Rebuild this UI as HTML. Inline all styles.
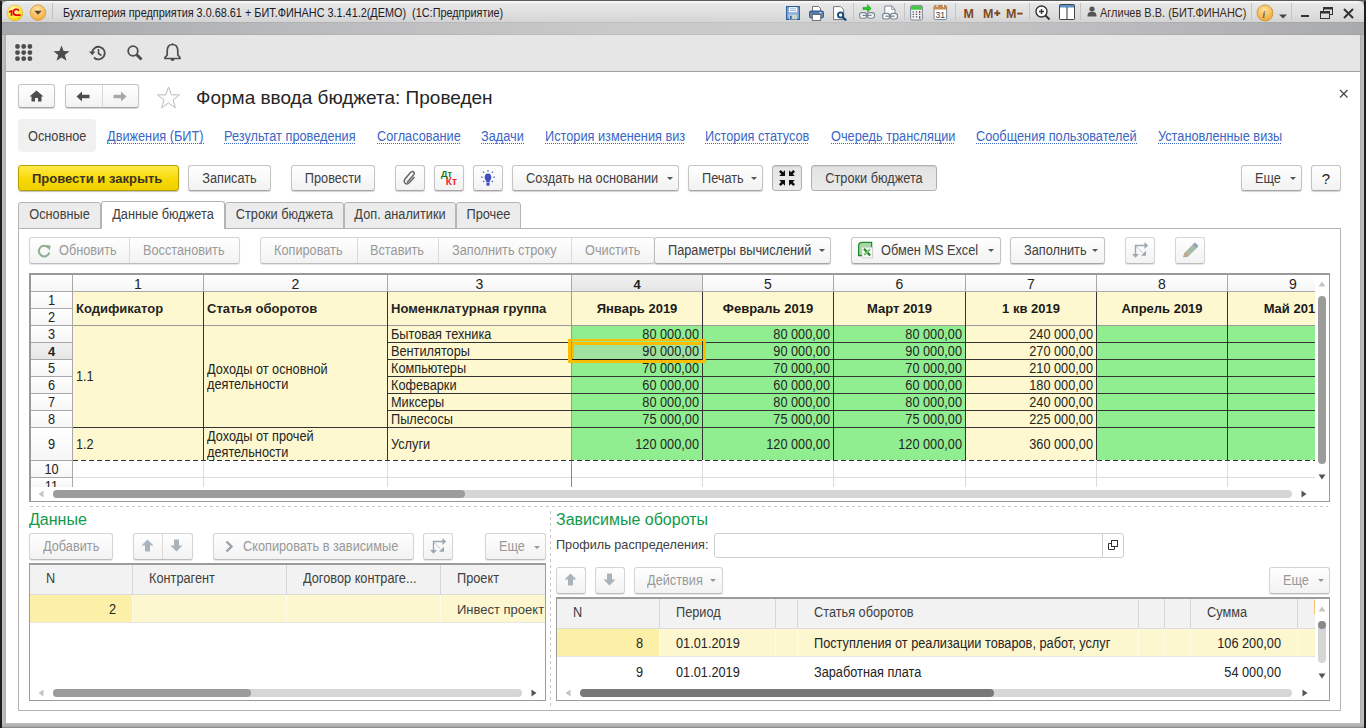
<!DOCTYPE html>
<html><head><meta charset="utf-8"><title>1C</title>
<style>
*{box-sizing:border-box}
html,body{margin:0;padding:0}
body{width:1366px;height:728px;overflow:hidden;position:relative;background:#a9aaad;font-family:"Liberation Sans", sans-serif;}
div{position:absolute}
.t{white-space:nowrap}
.btn{border:1px solid #c4c4c4;border-bottom-color:#a6a6a6;border-radius:3px;background:linear-gradient(#ffffff,#f2f2f2);box-shadow:0 1px 1px rgba(0,0,0,0.18)}
.btnd{border:1px solid #d4d4d4;border-bottom-color:#bcbcbc;border-radius:3px;background:linear-gradient(#ffffff,#f2f2f2);box-shadow:0 1px 1px rgba(0,0,0,0.10)}
.lnk{border-bottom:1px dotted #3b6bc0}
</style></head><body>

<div style="left:0px;top:0px;width:1366px;height:728px;background:#a9aaad"></div>
<div style="left:0px;top:0px;width:2px;height:728px;background:#1e1e1e"></div>
<div style="left:2px;top:22px;width:4px;height:706px;background:linear-gradient(90deg,#c4c4c4,#aeaeb0)"></div>
<div style="left:1364px;top:0px;width:2px;height:728px;background:#1e1e1e"></div>
<div style="left:1360px;top:22px;width:4px;height:706px;background:linear-gradient(90deg,#aeaeb0,#c4c4c4)"></div>
<div style="left:2px;top:723px;width:1362px;height:5px;background:linear-gradient(#bdbdbd,#a4a4a6)"></div>
<div style="left:2px;top:727px;width:1362px;height:1px;background:#8c8c8c"></div>
<div style="left:0px;top:0px;width:1366px;height:1px;background:#5a5a5a"></div>
<div style="left:2px;top:1px;width:1362px;height:21px;background:linear-gradient(#fbfbfb,#e6e6e6 15%,#dddddd 70%,#d3d3d4);border-radius:6px 6px 0 0"></div>
<div style="left:2px;top:22px;width:1362px;height:13px;background:linear-gradient(90deg,#a7a8ab 0%,#b8b9bb 20%,#c9c9c9 45%,#cbcbcb 58%,#bdbdbf 80%,#a9aaad 100%)"></div>
<div style="left:2px;top:22px;width:1362px;height:1px;background:rgba(0,0,0,0.04)"></div>
<div style="left:2px;top:34px;width:1362px;height:1px;background:rgba(0,0,0,0.05)"></div>
<div style="left:6px;top:35px;width:1354px;height:688px;background:#ffffff"></div>
<div style="left:6px;top:35px;width:1354px;height:36px;background:#e6e6e6"></div>
<div style="left:6px;top:71px;width:1354px;height:1px;background:#a0a0a0"></div>
<svg style="position:absolute;left:6px;top:3px;" width="20" height="20" viewBox="0 0 20 20"><defs><radialGradient id="g1c" cx="40%" cy="30%" r="75%"><stop offset="0" stop-color="#fffbc0"/><stop offset="0.6" stop-color="#fde84a"/><stop offset="1" stop-color="#f0c000"/></radialGradient></defs><circle cx="8.9" cy="10" r="7.8" fill="url(#g1c)" stroke="#e3b400" stroke-width="0.6"/><path d="M2.9 8.3 L5.2 6.9 H6.4 V12.8 H4.7 V9.1 L2.9 10 Z" fill="#e8000b"/><path d="M12.9 7.9 A2.9 2.9 0 1 0 10.2 12.1 H14.6" fill="none" stroke="#e8000b" stroke-width="1.7"/></svg>
<svg style="position:absolute;left:29px;top:3px;" width="20" height="20" viewBox="0 0 20 20"><defs><radialGradient id="gor" cx="45%" cy="30%" r="70%"><stop offset="0" stop-color="#ffe5a8"/><stop offset="1" stop-color="#f5a93a"/></radialGradient></defs><circle cx="9" cy="9.6" r="7.8" fill="url(#gor)" stroke="#d49a40" stroke-width="0.8"/><path d="M5.2 7.8 L12.8 7.8 L9 11.8 Z" fill="#5a4630"/></svg>
<div style="left:52px;top:3px;width:1px;height:16px;background:#c0c0c0"></div>
<div class="t" style="left:63px;top:6.84px;font-size:12px;line-height:12px;height:12px;color:#1a1a28;font-weight:normal;text-align:left;transform:scaleX(0.905);transform-origin:0 0">Бухгалтерия предприятия 3.0.68.61 + БИТ.ФИНАНС 3.1.41.2(ДЕМО)&nbsp; (1С:Предприятие)</div>
<svg style="position:absolute;left:786px;top:6px;" width="14" height="14" viewBox="0 0 14 14"><path d="M0.6 0.6 H13.4 V13.4 H0.6 Z" fill="#86ade0" stroke="#2e5c98" stroke-width="1.1"/><rect x="3" y="1.2" width="8" height="5" fill="#fff"/><path d="M4 2.8 H10 M4 4.6 H10" stroke="#7d9cc8" stroke-width="0.8"/><rect x="3" y="8.6" width="8" height="4.8" fill="#c9d6cc"/><rect x="4" y="9.8" width="1.6" height="3.2" fill="#2e5c98"/></svg>
<svg style="position:absolute;left:809px;top:6px;" width="15" height="15" viewBox="0 0 15 15"><path d="M3.5 0.5 H9.5 L11.5 2.5 V6 H3.5 Z" fill="#fff" stroke="#555" stroke-width="0.8"/><rect x="0.7" y="5.2" width="13.6" height="6.6" rx="1.5" fill="#6f97cc" stroke="#2a548a" stroke-width="1.2"/><path d="M2 7 H13" stroke="#2a548a" stroke-width="0.8"/><rect x="10.5" y="6.2" width="2" height="1" fill="#fff"/><rect x="3.3" y="8.6" width="8.4" height="5.8" fill="#fff" stroke="#555" stroke-width="0.8"/></svg>
<svg style="position:absolute;left:833px;top:6px;" width="15" height="15" viewBox="0 0 15 15"><path d="M0.6 0.6 H7.6 L10.6 3.6 V13.6 H0.6 Z" fill="#fff" stroke="#6a6a6a" stroke-width="0.9"/><circle cx="7.6" cy="9" r="2.6" fill="#fff" stroke="#164a7c" stroke-width="1.9"/><path d="M9.4 10.9 L13.2 14.5" stroke="#164a7c" stroke-width="2.2"/></svg>
<div style="left:853px;top:3px;width:1px;height:17px;background:#c4c4c4"></div>
<svg style="position:absolute;left:859px;top:4px;" width="17" height="16" viewBox="0 0 17 16"><rect x="0.6" y="8.6" width="7" height="5.6" rx="2.2" fill="#f4f6f8" stroke="#7a8694" stroke-width="1.1"/><rect x="8.4" y="8.6" width="7" height="5.6" rx="2.2" fill="#f4f6f8" stroke="#7a8694" stroke-width="1.1"/><path d="M3.5 11.4 H12.5" stroke="#7a8694" stroke-width="1.3"/><path d="M4 3.4 H8.5 V0.8 L12.2 4.4 L8.5 8 V5.4 H4 Z" fill="#22cc22" stroke="#139a13" stroke-width="0.6"/></svg>
<svg style="position:absolute;left:882px;top:5px;" width="17" height="16" viewBox="0 0 17 16"><path d="M2.8 9 V1 H9.6 L13 4.4 V9" fill="#fff" stroke="#7a8694" stroke-width="1"/><path d="M9.6 1 V4.4 H13" fill="none" stroke="#7a8694" stroke-width="0.8"/><rect x="0.6" y="8.4" width="7" height="5.6" rx="2.2" fill="#f4f6f8" stroke="#7a8694" stroke-width="1.1"/><rect x="8.4" y="8.4" width="7" height="5.6" rx="2.2" fill="#f4f6f8" stroke="#7a8694" stroke-width="1.1"/><path d="M3.5 11.2 H12.5" stroke="#7a8694" stroke-width="1.3"/></svg>
<div style="left:904px;top:3px;width:1px;height:17px;background:#c4c4c4"></div>
<svg style="position:absolute;left:910px;top:5px;" width="13" height="16" viewBox="0 0 13 16"><rect x="0.6" y="0.6" width="11.8" height="14.4" rx="1.2" fill="#f0f3f6" stroke="#7a8694" stroke-width="1"/><rect x="1.1" y="1.1" width="10.8" height="3.6" fill="#3ec93e"/><g fill="#555"><rect x="2.6" y="6.4" width="1.4" height="1.2"/><rect x="5.8" y="6.4" width="1.4" height="1.2"/><rect x="2.6" y="8.8" width="1.4" height="1.2"/><rect x="5.8" y="8.8" width="1.4" height="1.2"/><rect x="9" y="8.8" width="1.4" height="1.2"/><rect x="2.6" y="11.2" width="1.4" height="1.2"/><rect x="5.8" y="11.2" width="1.4" height="1.2"/><rect x="9" y="11.2" width="1.4" height="2.4"/></g><rect x="9" y="6" width="1.4" height="2" fill="#e52020"/></svg>
<svg style="position:absolute;left:933px;top:4px;" width="15" height="17" viewBox="0 0 15 17"><rect x="1" y="1.4" width="12.6" height="14.2" rx="1.5" fill="#fff" stroke="#7a8694" stroke-width="1"/><path d="M1 3 C1 2 1.6 1.4 2.6 1.4 H12 C13 1.4 13.6 2 13.6 3 V5.4 H1 Z" fill="#c98a4e"/><rect x="3.6" y="0.6" width="1" height="2.6" fill="#fff"/><rect x="10" y="0.6" width="1" height="2.6" fill="#fff"/><text x="2.4" y="14" font-family="Liberation Sans" font-size="8.6" fill="#444">31</text></svg>
<div style="left:955px;top:3px;width:1px;height:17px;background:#c4c4c4"></div>
<svg style="position:absolute;left:960px;top:4px;" width="66" height="18" viewBox="0 0 66 18"><g font-family="Liberation Sans" font-weight="bold" font-size="12.5" fill="#7e4a1e"><text x="3.4" y="13.6">M</text><text x="23" y="13.6">M</text><text x="46" y="13.6">M</text></g><path d="M34.3 9.2 H40.2 M37.25 6.3 V12.1" stroke="#7e4a1e" stroke-width="1.9"/><path d="M57.2 9.6 H62.6" stroke="#7e4a1e" stroke-width="1.9"/></svg>
<div style="left:1029px;top:3px;width:1px;height:17px;background:#c4c4c4"></div>
<svg style="position:absolute;left:1035px;top:5px;" width="16" height="16" viewBox="0 0 16 16"><circle cx="6.5" cy="6.5" r="5.5" fill="#fff" stroke="#333" stroke-width="1.4"/><path d="M4 6.5 H9 M6.5 4 V9" stroke="#333" stroke-width="1.4"/><path d="M10.5 10.5 L14.5 14.5" stroke="#333" stroke-width="2"/></svg>
<svg style="position:absolute;left:1059px;top:4px;" width="16" height="17" viewBox="0 0 16 17"><rect x="0.5" y="0.5" width="15" height="15" rx="1" fill="#fff" stroke="#5b8fd0"/><rect x="1" y="1" width="14" height="2.5" fill="#5b8fd0"/><rect x="7.5" y="3" width="1" height="12" fill="#333"/><rect x="0.5" y="0.5" width="15" height="15" rx="1" fill="none" stroke="#444"/></svg>
<div style="left:1080px;top:3px;width:1px;height:17px;background:#c4c4c4"></div>
<svg style="position:absolute;left:1087px;top:6px;" width="10" height="11" viewBox="0 0 10 11"><circle cx="5" cy="3" r="2.6" fill="#555"/><path d="M0.5 10.5 C0.5 6 2.5 6 5 6 C7.5 6 9.5 6 9.5 10.5 Z" fill="#555"/></svg>
<div class="t" style="left:1100px;top:6.84px;font-size:12px;line-height:12px;height:12px;color:#3a2a18;font-weight:normal;text-align:left;transform:scaleX(0.915);transform-origin:0 0">Агличев В.В. (БИТ.ФИНАНС)</div>
<div style="left:1251px;top:3px;width:1px;height:17px;background:#c4c4c4"></div>
<svg style="position:absolute;left:1256px;top:4px;" width="18" height="18" viewBox="0 0 18 18"><defs><radialGradient id="ginf" cx="45%" cy="30%" r="70%"><stop offset="0" stop-color="#ffe3a0"/><stop offset="1" stop-color="#f0a830"/></radialGradient></defs><circle cx="9" cy="9" r="8" fill="url(#ginf)" stroke="#c89030" stroke-width="0.8"/><text x="6.3" y="13.5" font-family="Liberation Serif" font-style="italic" font-weight="bold" font-size="11" fill="#6a6a6a">i</text></svg>
<svg style="position:absolute;left:1279px;top:14px;" width="8" height="5" viewBox="0 0 8 5"><path d="M0 0.5 H8 L4 4.5 Z" fill="#444"/></svg>
<div style="left:1291px;top:3px;width:1px;height:17px;background:#c4c4c4"></div>
<div style="left:1301px;top:15px;width:8px;height:2px;background:#333"></div>
<svg style="position:absolute;left:1320px;top:7px;" width="13" height="12" viewBox="0 0 13 12"><rect x="3.5" y="0.5" width="9" height="7" fill="none" stroke="#333" stroke-width="1"/><rect x="3.5" y="0.5" width="9" height="2" fill="#333"/><rect x="0.5" y="4.5" width="9" height="7" fill="#ddd" stroke="#333" stroke-width="1"/><rect x="0.5" y="4.5" width="9" height="2" fill="#333"/></svg>
<svg style="position:absolute;left:1343px;top:8px;" width="11" height="11" viewBox="0 0 11 11"><path d="M1 1 L10 10 M10 1 L1 10" stroke="#333" stroke-width="2"/></svg>
<svg style="position:absolute;left:15px;top:44px;" width="19" height="18" viewBox="0 0 19 18"><circle cx="2.5" cy="2.5" r="2.4" fill="#4d4d4d"/><circle cx="2.5" cy="8.6" r="2.4" fill="#4d4d4d"/><circle cx="2.5" cy="14.7" r="2.4" fill="#4d4d4d"/><circle cx="8.7" cy="2.5" r="2.4" fill="#4d4d4d"/><circle cx="8.7" cy="8.6" r="2.4" fill="#4d4d4d"/><circle cx="8.7" cy="14.7" r="2.4" fill="#4d4d4d"/><circle cx="14.9" cy="2.5" r="2.4" fill="#4d4d4d"/><circle cx="14.9" cy="8.6" r="2.4" fill="#4d4d4d"/><circle cx="14.9" cy="14.7" r="2.4" fill="#4d4d4d"/></svg>
<svg style="position:absolute;left:53px;top:45px;" width="17" height="17" viewBox="0 0 17 17"><path d="M8.5 0.5 L10.6 6 L16.5 6.2 L11.8 9.9 L13.5 15.8 L8.5 12.4 L3.5 15.8 L5.2 9.9 L0.5 6.2 L6.4 6 Z" fill="#4d4d4d"/></svg>
<svg style="position:absolute;left:89px;top:45px;" width="18" height="16" viewBox="0 0 18 16"><path d="M3.2 8 A6.3 6.3 0 1 1 5 12.5" fill="none" stroke="#4d4d4d" stroke-width="1.8"/><path d="M0 6.5 L3.3 10.2 L6.3 6.5 Z" fill="#4d4d4d"/><path d="M9.5 4 V8.5 L12.5 10.5" fill="none" stroke="#4d4d4d" stroke-width="1.6"/></svg>
<svg style="position:absolute;left:127px;top:45px;" width="17" height="16" viewBox="0 0 17 16"><circle cx="6" cy="6" r="4.8" fill="none" stroke="#4d4d4d" stroke-width="1.8"/><path d="M9.5 9.5 L14.5 14.5" stroke="#4d4d4d" stroke-width="3"/></svg>
<svg style="position:absolute;left:164px;top:43px;" width="17" height="19" viewBox="0 0 17 19"><path d="M8.5 1.5 C4.5 1.5 3.2 4.5 3.2 8 V12 L1 14.5 V15.5 H16 V14.5 L13.8 12 V8 C13.8 4.5 12.5 1.5 8.5 1.5 Z" fill="none" stroke="#4d4d4d" stroke-width="1.7"/><path d="M6.5 16 A2 2 0 0 0 10.5 16 Z" fill="#4d4d4d"/><circle cx="8.5" cy="1.3" r="1" fill="#4d4d4d"/></svg>
<div class="btn" style="left:18px;top:84px;width:37px;height:24px;"></div>
<svg style="position:absolute;left:29px;top:90px;" width="15" height="12" viewBox="0 0 15 12"><path d="M7.5 0.5 L14.5 6.5 H12.5 V11.5 H9 V8 H6 V11.5 H2.5 V6.5 H0.5 Z" fill="#4d4d4d"/></svg>
<div class="btn" style="left:65px;top:84px;width:74px;height:24px;"></div>
<div style="left:102px;top:85px;width:1px;height:22px;background:#d8d8d8"></div>
<svg style="position:absolute;left:76px;top:91px;" width="14" height="11" viewBox="0 0 14 11"><path d="M0.5 5.5 L6 0.5 V3.8 H13.5 V7.2 H6 V10.5 Z" fill="#4d4d4d"/></svg>
<svg style="position:absolute;left:113px;top:91px;" width="14" height="11" viewBox="0 0 14 11"><path d="M13.5 5.5 L8 0.5 V3.8 H0.5 V7.2 H8 V10.5 Z" fill="#a8a8a8"/></svg>
<svg style="position:absolute;left:156px;top:86px;" width="25" height="23" viewBox="0 0 25 23"><path d="M12.5 1 L15.3 8.8 L23.5 8.9 L17 13.8 L19.4 21.8 L12.5 17 L5.6 21.8 L8 13.8 L1.5 8.9 L9.7 8.8 Z" fill="none" stroke="#b9bcc2" stroke-width="1"/></svg>
<div class="t" style="left:196px;top:87.92px;font-size:19px;line-height:19px;height:19px;color:#252525;font-weight:normal;text-align:left;">Форма ввода бюджета: Проведен</div>
<svg style="position:absolute;left:1339px;top:89px;" width="10" height="10" viewBox="0 0 10 10"><path d="M1 1 L8.5 8.5 M8.5 1 L1 8.5" stroke="#444" stroke-width="1.2"/></svg>
<div style="left:18px;top:119px;width:78px;height:33px;background:#f0f0f0;border-radius:4px"></div>
<div class="t" style="left:28px;top:129.15px;font-size:14px;line-height:14px;height:14px;color:#404040;font-weight:normal;text-align:left;transform:scaleX(0.91);transform-origin:0 0;">Основное</div>
<div class="t" style="left:107px;top:129.15px;font-size:14px;line-height:14px;height:14px;color:#3a66c4;font-weight:normal;text-align:left;transform:scaleX(0.91);transform-origin:0 0;">Движения (БИТ)</div>
<div class="t" style="left:224px;top:129.15px;font-size:14px;line-height:14px;height:14px;color:#3a66c4;font-weight:normal;text-align:left;transform:scaleX(0.91);transform-origin:0 0;">Результат проведения</div>
<div class="t" style="left:377px;top:129.15px;font-size:14px;line-height:14px;height:14px;color:#3a66c4;font-weight:normal;text-align:left;transform:scaleX(0.91);transform-origin:0 0;">Согласование</div>
<div class="t" style="left:481px;top:129.15px;font-size:14px;line-height:14px;height:14px;color:#3a66c4;font-weight:normal;text-align:left;transform:scaleX(0.91);transform-origin:0 0;">Задачи</div>
<div class="t" style="left:545px;top:129.15px;font-size:14px;line-height:14px;height:14px;color:#3a66c4;font-weight:normal;text-align:left;transform:scaleX(0.91);transform-origin:0 0;">История изменения виз</div>
<div class="t" style="left:705px;top:129.15px;font-size:14px;line-height:14px;height:14px;color:#3a66c4;font-weight:normal;text-align:left;transform:scaleX(0.91);transform-origin:0 0;">История статусов</div>
<div class="t" style="left:831px;top:129.15px;font-size:14px;line-height:14px;height:14px;color:#3a66c4;font-weight:normal;text-align:left;transform:scaleX(0.91);transform-origin:0 0;">Очередь трансляции</div>
<div class="t" style="left:976px;top:129.15px;font-size:14px;line-height:14px;height:14px;color:#3a66c4;font-weight:normal;text-align:left;transform:scaleX(0.91);transform-origin:0 0;">Сообщения пользователей</div>
<div class="t" style="left:1158px;top:129.15px;font-size:14px;line-height:14px;height:14px;color:#3a66c4;font-weight:normal;text-align:left;transform:scaleX(0.91);transform-origin:0 0;">Установленные визы</div>
<div style="left:107px;top:143px;width:96.5px;height:1px;background:repeating-linear-gradient(90deg,#3a66c4 0 1px,transparent 1px 2px)"></div>
<div style="left:224px;top:143px;width:131.5px;height:1px;background:repeating-linear-gradient(90deg,#3a66c4 0 1px,transparent 1px 2px)"></div>
<div style="left:377px;top:143px;width:83.7px;height:1px;background:repeating-linear-gradient(90deg,#3a66c4 0 1px,transparent 1px 2px)"></div>
<div style="left:481px;top:143px;width:42.8px;height:1px;background:repeating-linear-gradient(90deg,#3a66c4 0 1px,transparent 1px 2px)"></div>
<div style="left:545px;top:143px;width:140.2px;height:1px;background:repeating-linear-gradient(90deg,#3a66c4 0 1px,transparent 1px 2px)"></div>
<div style="left:705px;top:143px;width:104.4px;height:1px;background:repeating-linear-gradient(90deg,#3a66c4 0 1px,transparent 1px 2px)"></div>
<div style="left:831px;top:143px;width:124.4px;height:1px;background:repeating-linear-gradient(90deg,#3a66c4 0 1px,transparent 1px 2px)"></div>
<div style="left:976px;top:143px;width:160.7px;height:1px;background:repeating-linear-gradient(90deg,#3a66c4 0 1px,transparent 1px 2px)"></div>
<div style="left:1158px;top:143px;width:124.2px;height:1px;background:repeating-linear-gradient(90deg,#3a66c4 0 1px,transparent 1px 2px)"></div>
<div style="left:18px;top:165px;width:161px;height:26px;border:1px solid #b59f00;border-radius:3px;background:linear-gradient(#ffe94a,#f7d800 60%,#f0d000);box-shadow:0 1px 1px rgba(0,0,0,0.25)"></div>
<div class="t" style="left:32px;top:172.0px;font-size:13px;line-height:13px;height:13px;color:#3a3320;font-weight:bold;text-align:left;">Провести и закрыть</div>
<div class="btn" style="left:188px;top:165px;width:83px;height:26px;"></div>
<div class="t" style="left:188px;width:83px;text-align:center;top:171.15px;font-size:14px;line-height:14px;height:14px;color:#404040;font-weight:normal;transform:scaleX(0.91);transform-origin:50% 0;">Записать</div>
<div class="btn" style="left:291px;top:165px;width:84px;height:26px;"></div>
<div class="t" style="left:291px;width:84px;text-align:center;top:171.15px;font-size:14px;line-height:14px;height:14px;color:#404040;font-weight:normal;transform:scaleX(0.91);transform-origin:50% 0;">Провести</div>
<div class="btn" style="left:395px;top:165px;width:30px;height:26px;"></div>
<svg style="position:absolute;left:403px;top:170px;" width="14" height="16" viewBox="0 0 14 16"><path d="M4 12.5 L10.5 5 C12 3.3 11 1.5 9.5 1.5 C8.5 1.5 8 2 7 3 L2 9 C0.5 10.8 1.5 14 4 14 C5 14 5.5 13.5 6.5 12.5 L11.5 7" fill="none" stroke="#666" stroke-width="1.5"/></svg>
<div class="btn" style="left:434px;top:165px;width:30px;height:26px;"></div>
<svg style="position:absolute;left:436px;top:168px;" width="24" height="20" viewBox="0 0 24 20"><text x="5" y="9.4" font-family="Liberation Sans" font-weight="bold" font-size="9" fill="#127a12">Дт</text><text x="9.8" y="17.2" font-family="Liberation Sans" font-weight="bold" font-size="10" fill="#f02a2a">Кт</text></svg>
<div class="btn" style="left:473px;top:165px;width:30px;height:26px;"></div>
<svg style="position:absolute;left:478px;top:167px;" width="20" height="21" viewBox="0 0 20 21"><g fill="#6f7fd8"><rect x="9.2" y="3" width="1.6" height="1.6"/><rect x="3" y="9.5" width="1.8" height="1.4"/><rect x="15.2" y="9.5" width="1.8" height="1.4"/></g><g stroke="#4a5ac8" stroke-width="1.1"><path d="M5 4.6 L6.3 5.9 M15 4.6 L13.7 5.9 M5 15.2 L6.3 13.9 M15 15.2 L13.7 13.9"/></g><path d="M10 6.4 C7.6 6.4 6.6 8.3 6.6 10.2 C6.6 12.2 8.1 13.2 8.3 15 H11.7 C11.9 13.2 13.4 12.2 13.4 10.2 C13.4 8.3 12.4 6.4 10 6.4 Z" fill="#3f4fc2"/><path d="M8.4 15.4 H11.6 V17.6 C11.6 18.6 10.8 19 10 19 C9.2 19 8.4 18.6 8.4 17.6 Z" fill="#3f4fc2"/></svg>
<div class="btn" style="left:512px;top:165px;width:167px;height:26px;"></div>
<div class="t" style="left:526px;top:171.15px;font-size:14px;line-height:14px;height:14px;color:#404040;font-weight:normal;text-align:left;transform:scaleX(0.91);transform-origin:0 0;">Создать на основании</div>
<svg style="position:absolute;left:667px;top:177px;" width="6" height="3" viewBox="0 0 6 3"><path d="M0 0 H6 L3 3 Z" fill="#555"/></svg>
<div class="btn" style="left:688px;top:165px;width:75px;height:26px;"></div>
<div class="t" style="left:702px;top:171.15px;font-size:14px;line-height:14px;height:14px;color:#404040;font-weight:normal;text-align:left;transform:scaleX(0.91);transform-origin:0 0;">Печать</div>
<svg style="position:absolute;left:751px;top:177px;" width="6" height="3" viewBox="0 0 6 3"><path d="M0 0 H6 L3 3 Z" fill="#555"/></svg>
<div style="left:772px;top:165px;width:30px;height:26px;border:1px solid #b0b0b0;border-radius:3px;background:linear-gradient(#e4e4e4,#ececec);box-shadow:inset 0 1px 1px rgba(0,0,0,0.1)"></div>
<svg style="position:absolute;left:779px;top:170px;" width="17" height="17" viewBox="0 0 17 17"><g fill="#111"><path d="M6 0.2 V6 H0.2 Z M10 0.2 V6 H15.8 Z M6 15.8 V10 H0.2 Z M10 15.8 V10 H15.8 Z"/></g><g stroke="#111" stroke-width="2.5"><path d="M0.9 0.9 L4 4 M15.1 0.9 L12 4 M0.9 15.1 L4 12 M15.1 15.1 L12 12"/></g></svg>
<div style="left:811px;top:165px;width:126px;height:26px;border:1px solid #b0b0b0;border-radius:3px;background:linear-gradient(#e2e2e2,#ebebeb);box-shadow:inset 0 1px 1px rgba(0,0,0,0.08)"></div>
<div class="t" style="left:811px;width:126px;text-align:center;top:171.15px;font-size:14px;line-height:14px;height:14px;color:#404040;font-weight:normal;transform:scaleX(0.91);transform-origin:50% 0;">Строки бюджета</div>
<div class="btn" style="left:1241px;top:165px;width:61px;height:26px;"></div>
<div class="t" style="left:1255px;top:171.15px;font-size:14px;line-height:14px;height:14px;color:#404040;font-weight:normal;text-align:left;transform:scaleX(0.91);transform-origin:0 0;">Еще</div>
<svg style="position:absolute;left:1290px;top:177px;" width="6" height="3" viewBox="0 0 6 3"><path d="M0 0 H6 L3 3 Z" fill="#555"/></svg>
<div class="btn" style="left:1311px;top:165px;width:30px;height:26px;"></div>
<div class="t" style="left:1311px;width:30px;text-align:center;top:170.8px;font-size:15px;line-height:15px;height:15px;color:#222;font-weight:normal;">?</div>
<div style="left:18px;top:228px;width:1323px;height:483px;border:1px solid #b4b4b4;background:#fff"></div>
<div style="left:18px;top:202px;width:83px;height:27px;border:1px solid #b4b4b4;border-radius:3px 3px 0 0;background:#ececec"></div>
<div class="t" style="left:18px;width:83px;text-align:center;top:207.15px;font-size:14px;line-height:14px;height:14px;color:#404040;font-weight:normal;transform:scaleX(0.91);transform-origin:50% 0;">Основные</div>
<div style="left:101px;top:201px;width:124px;height:28px;border:1px solid #b4b4b4;border-bottom:none;border-radius:3px 3px 0 0;background:#fff"></div>
<div class="t" style="left:101px;width:124px;text-align:center;top:207.15px;font-size:14px;line-height:14px;height:14px;color:#404040;font-weight:normal;transform:scaleX(0.91);transform-origin:50% 0;">Данные бюджета</div>
<div style="left:225px;top:202px;width:119px;height:27px;border:1px solid #b4b4b4;border-radius:3px 3px 0 0;background:#ececec"></div>
<div class="t" style="left:225px;width:119px;text-align:center;top:207.15px;font-size:14px;line-height:14px;height:14px;color:#404040;font-weight:normal;transform:scaleX(0.91);transform-origin:50% 0;">Строки бюджета</div>
<div style="left:344px;top:202px;width:112px;height:27px;border:1px solid #b4b4b4;border-radius:3px 3px 0 0;background:#ececec"></div>
<div class="t" style="left:344px;width:112px;text-align:center;top:207.15px;font-size:14px;line-height:14px;height:14px;color:#404040;font-weight:normal;transform:scaleX(0.91);transform-origin:50% 0;">Доп. аналитики</div>
<div style="left:456px;top:202px;width:65px;height:27px;border:1px solid #b4b4b4;border-radius:3px 3px 0 0;background:#ececec"></div>
<div class="t" style="left:456px;width:65px;text-align:center;top:207.15px;font-size:14px;line-height:14px;height:14px;color:#404040;font-weight:normal;transform:scaleX(0.91);transform-origin:50% 0;">Прочее</div>
<div class="btnd" style="left:29px;top:237px;width:211px;height:27px;"></div>
<div style="left:129px;top:238px;width:1px;height:25px;background:#dadada"></div>
<svg style="position:absolute;left:37px;top:244px;" width="14" height="14" viewBox="0 0 14 14"><path d="M11.5 4 A5.3 5.3 0 1 0 12.3 8.5" fill="none" stroke="#8fae8f" stroke-width="2"/><path d="M8.5 1 L13.5 1.5 L13 6.5 Z" fill="#8fae8f"/></svg>
<div class="t" style="left:59px;top:243.15px;font-size:14px;line-height:14px;height:14px;color:#999;font-weight:normal;text-align:left;transform:scaleX(0.91);transform-origin:0 0;">Обновить</div>
<div class="t" style="left:143px;top:243.15px;font-size:14px;line-height:14px;height:14px;color:#999;font-weight:normal;text-align:left;transform:scaleX(0.91);transform-origin:0 0;">Восстановить</div>
<div class="btnd" style="left:260px;top:237px;width:395px;height:27px;"></div>
<div style="left:357px;top:238px;width:1px;height:25px;background:#dadada"></div>
<div style="left:438px;top:238px;width:1px;height:25px;background:#dadada"></div>
<div style="left:571px;top:238px;width:1px;height:25px;background:#dadada"></div>
<div class="t" style="left:274px;top:243.15px;font-size:14px;line-height:14px;height:14px;color:#999;font-weight:normal;text-align:left;transform:scaleX(0.91);transform-origin:0 0;">Копировать</div>
<div class="t" style="left:370px;top:243.15px;font-size:14px;line-height:14px;height:14px;color:#999;font-weight:normal;text-align:left;transform:scaleX(0.91);transform-origin:0 0;">Вставить</div>
<div class="t" style="left:452px;top:243.15px;font-size:14px;line-height:14px;height:14px;color:#999;font-weight:normal;text-align:left;transform:scaleX(0.91);transform-origin:0 0;">Заполнить строку</div>
<div class="t" style="left:585px;top:243.15px;font-size:14px;line-height:14px;height:14px;color:#999;font-weight:normal;text-align:left;transform:scaleX(0.91);transform-origin:0 0;">Очистить</div>
<div class="btn" style="left:654px;top:237px;width:177px;height:27px;border-left-color:#bdbdbd"></div>
<div class="t" style="left:668px;top:243.15px;font-size:14px;line-height:14px;height:14px;color:#404040;font-weight:normal;text-align:left;transform:scaleX(0.91);transform-origin:0 0;">Параметры вычислений</div>
<svg style="position:absolute;left:819px;top:249px;" width="6" height="3" viewBox="0 0 6 3"><path d="M0 0 H6 L3 3 Z" fill="#555"/></svg>
<div class="btn" style="left:851px;top:237px;width:150px;height:27px;"></div>
<svg style="position:absolute;left:857px;top:241px;" width="17" height="18" viewBox="0 0 17 18"><path d="M1.6 14.5 V5.2 C1.6 2.6 2.8 1.4 5.4 1.4 H14.6 V14.5 Z" fill="#a6d8a6" stroke="#1d8a2c" stroke-width="1.3"/><path d="M4.6 6.2 H15.6 V16.8 H5.2 Z" fill="#fafafa" stroke="#b8b8b8" stroke-width="0.6"/><path d="M7 7.8 L13.2 14.6" stroke="#2b862b" stroke-width="2.3"/><path d="M13 8.2 L7.2 14" stroke="#74c274" stroke-width="2"/></svg>
<div class="t" style="left:881px;top:243.15px;font-size:14px;line-height:14px;height:14px;color:#404040;font-weight:normal;text-align:left;transform:scaleX(0.91);transform-origin:0 0;">Обмен MS Excel</div>
<svg style="position:absolute;left:988px;top:249px;" width="6" height="3" viewBox="0 0 6 3"><path d="M0 0 H6 L3 3 Z" fill="#555"/></svg>
<div class="btn" style="left:1010px;top:237px;width:95px;height:27px;"></div>
<div class="t" style="left:1024px;top:243.15px;font-size:14px;line-height:14px;height:14px;color:#404040;font-weight:normal;text-align:left;transform:scaleX(0.91);transform-origin:0 0;">Заполнить</div>
<svg style="position:absolute;left:1092px;top:249px;" width="6" height="3" viewBox="0 0 6 3"><path d="M0 0 H6 L3 3 Z" fill="#555"/></svg>
<div class="btnd" style="left:1125px;top:237px;width:30px;height:27px;"></div>
<svg style="position:absolute;left:1125px;top:237px;" width="30" height="27" viewBox="0 0 30 27"><g fill="none" stroke="#9aa8b4" stroke-width="1.4"><path d="M10.5 19 V8.5 H20"/></g><path d="M10.7 9 L18 16.3" stroke="#9aa8b4" stroke-width="1" stroke-dasharray="1.2 0.8"/><path d="M19.5 5 L23.2 8.5 L19.5 12 Z M7 17 L10.5 20.8 L14 17 Z M16 18.8 L21 13.8 V18.8 Z" fill="#9aa8b4"/></svg>
<div class="btnd" style="left:1175px;top:237px;width:30px;height:27px;"></div>
<svg style="position:absolute;left:1175px;top:237px;" width="30" height="27" viewBox="0 0 30 27"><path d="M8 20.5 L9.2 16 L11 14.2 L14.8 18 L13 19.8 Z" fill="#b9aa92"/><path d="M11 14.2 L17.5 7.7 L21.3 11.5 L14.8 18 Z" fill="#a3bca3"/><path d="M17.5 7.7 L19 6.2 C19.6 5.6 20.2 5.6 20.8 6.2 L22.8 8.2 C23.4 8.8 23.4 9.4 22.8 10 L21.3 11.5 Z" fill="#93a3b3"/></svg>
<div style="left:29px;top:273px;width:1301px;height:229px;background:#fff;border:2px solid #9a9a9a"></div>
<div style="left:73px;top:275px;width:130px;height:16px;background:linear-gradient(#ffffff,#f6f6f6)"></div>
<div class="t" style="left:73px;width:130px;text-align:center;top:277.15px;font-size:14px;line-height:14px;height:14px;color:#222;font-weight:normal;overflow:hiddentransform:scaleX(0.91);transform-origin:50% 0;">1</div>
<div style="left:204px;top:275px;width:183px;height:16px;background:linear-gradient(#ffffff,#f6f6f6)"></div>
<div class="t" style="left:204px;width:183px;text-align:center;top:277.15px;font-size:14px;line-height:14px;height:14px;color:#222;font-weight:normal;overflow:hiddentransform:scaleX(0.91);transform-origin:50% 0;">2</div>
<div style="left:388px;top:275px;width:183px;height:16px;background:linear-gradient(#ffffff,#f6f6f6)"></div>
<div class="t" style="left:388px;width:183px;text-align:center;top:277.15px;font-size:14px;line-height:14px;height:14px;color:#222;font-weight:normal;overflow:hiddentransform:scaleX(0.91);transform-origin:50% 0;">3</div>
<div style="left:572px;top:275px;width:130px;height:16px;background:linear-gradient(#f0f0f0,#e6e6e6)"></div>
<div class="t" style="left:572px;width:130px;text-align:center;top:278.0px;font-size:13px;line-height:13px;height:13px;color:#222;font-weight:bold;overflow:hidden">4</div>
<div style="left:703px;top:275px;width:130px;height:16px;background:linear-gradient(#ffffff,#f6f6f6)"></div>
<div class="t" style="left:703px;width:130px;text-align:center;top:277.15px;font-size:14px;line-height:14px;height:14px;color:#222;font-weight:normal;overflow:hiddentransform:scaleX(0.91);transform-origin:50% 0;">5</div>
<div style="left:834px;top:275px;width:131px;height:16px;background:linear-gradient(#ffffff,#f6f6f6)"></div>
<div class="t" style="left:834px;width:131px;text-align:center;top:277.15px;font-size:14px;line-height:14px;height:14px;color:#222;font-weight:normal;overflow:hiddentransform:scaleX(0.91);transform-origin:50% 0;">6</div>
<div style="left:966px;top:275px;width:130px;height:16px;background:linear-gradient(#ffffff,#f6f6f6)"></div>
<div class="t" style="left:966px;width:130px;text-align:center;top:277.15px;font-size:14px;line-height:14px;height:14px;color:#222;font-weight:normal;overflow:hiddentransform:scaleX(0.91);transform-origin:50% 0;">7</div>
<div style="left:1097px;top:275px;width:130px;height:16px;background:linear-gradient(#ffffff,#f6f6f6)"></div>
<div class="t" style="left:1097px;width:130px;text-align:center;top:277.15px;font-size:14px;line-height:14px;height:14px;color:#222;font-weight:normal;overflow:hiddentransform:scaleX(0.91);transform-origin:50% 0;">8</div>
<div style="left:1228px;top:275px;width:87px;height:16px;background:linear-gradient(#ffffff,#f6f6f6)"></div>
<div class="t" style="left:1228px;width:130px;text-align:center;top:277.15px;font-size:14px;line-height:14px;height:14px;color:#222;font-weight:normal;overflow:hiddentransform:scaleX(0.91);transform-origin:50% 0;">9</div>
<div style="left:31px;top:275px;width:41px;height:16px;background:linear-gradient(#ffffff,#f6f6f6)"></div>
<div style="left:31px;top:292px;width:41px;height:16px;background:linear-gradient(#ffffff,#f6f6f6);overflow:hidden"></div>
<div class="t" style="left:31px;width:41px;text-align:center;top:293.15px;font-size:14px;line-height:14px;height:14px;color:#222;font-weight:normal;transform:scaleX(0.91);transform-origin:50% 0;">1</div>
<div style="left:31px;top:309px;width:41px;height:16px;background:linear-gradient(#ffffff,#f6f6f6);overflow:hidden"></div>
<div class="t" style="left:31px;width:41px;text-align:center;top:310.15px;font-size:14px;line-height:14px;height:14px;color:#222;font-weight:normal;transform:scaleX(0.91);transform-origin:50% 0;">2</div>
<div style="left:31px;top:326px;width:41px;height:16px;background:linear-gradient(#ffffff,#f6f6f6);overflow:hidden"></div>
<div class="t" style="left:31px;width:41px;text-align:center;top:327.15px;font-size:14px;line-height:14px;height:14px;color:#222;font-weight:normal;transform:scaleX(0.91);transform-origin:50% 0;">3</div>
<div style="left:31px;top:343px;width:41px;height:16px;background:linear-gradient(#f0f0f0,#e6e6e6);overflow:hidden"></div>
<div class="t" style="left:31px;width:41px;text-align:center;top:345.0px;font-size:13px;line-height:13px;height:13px;color:#222;font-weight:bold;">4</div>
<div style="left:31px;top:360px;width:41px;height:16px;background:linear-gradient(#ffffff,#f6f6f6);overflow:hidden"></div>
<div class="t" style="left:31px;width:41px;text-align:center;top:361.15px;font-size:14px;line-height:14px;height:14px;color:#222;font-weight:normal;transform:scaleX(0.91);transform-origin:50% 0;">5</div>
<div style="left:31px;top:377px;width:41px;height:16px;background:linear-gradient(#ffffff,#f6f6f6);overflow:hidden"></div>
<div class="t" style="left:31px;width:41px;text-align:center;top:378.15px;font-size:14px;line-height:14px;height:14px;color:#222;font-weight:normal;transform:scaleX(0.91);transform-origin:50% 0;">6</div>
<div style="left:31px;top:394px;width:41px;height:16px;background:linear-gradient(#ffffff,#f6f6f6);overflow:hidden"></div>
<div class="t" style="left:31px;width:41px;text-align:center;top:395.15px;font-size:14px;line-height:14px;height:14px;color:#222;font-weight:normal;transform:scaleX(0.91);transform-origin:50% 0;">7</div>
<div style="left:31px;top:411px;width:41px;height:16px;background:linear-gradient(#ffffff,#f6f6f6);overflow:hidden"></div>
<div class="t" style="left:31px;width:41px;text-align:center;top:412.15px;font-size:14px;line-height:14px;height:14px;color:#222;font-weight:normal;transform:scaleX(0.91);transform-origin:50% 0;">8</div>
<div style="left:31px;top:428px;width:41px;height:32px;background:linear-gradient(#ffffff,#f6f6f6);overflow:hidden"></div>
<div class="t" style="left:31px;width:41px;text-align:center;top:437.15px;font-size:14px;line-height:14px;height:14px;color:#222;font-weight:normal;transform:scaleX(0.91);transform-origin:50% 0;">9</div>
<div style="left:31px;top:461px;width:41px;height:16px;background:linear-gradient(#ffffff,#f6f6f6);overflow:hidden"></div>
<div class="t" style="left:31px;width:41px;text-align:center;top:462.15px;font-size:14px;line-height:14px;height:14px;color:#222;font-weight:normal;transform:scaleX(0.91);transform-origin:50% 0;">10</div>
<div style="left:31px;top:478px;width:41px;height:9px;background:linear-gradient(#ffffff,#f6f6f6);overflow:hidden"></div>
<div class="t" style="left:31px;width:41px;text-align:center;top:479.15px;font-size:14px;line-height:14px;height:14px;color:#222;font-weight:normal;transform:scaleX(0.91);transform-origin:50% 0;">11</div>
<div style="left:73px;top:292px;width:1242px;height:33px;background:#fdf8cf"></div>
<div style="left:73px;top:326px;width:498px;height:134px;background:#fdf8cf"></div>
<div style="left:572px;top:326px;width:393px;height:134px;background:#90ee90"></div>
<div style="left:966px;top:326px;width:130px;height:134px;background:#fdf8cf"></div>
<div style="left:1097px;top:326px;width:218px;height:134px;background:#90ee90"></div>
<div style="left:72px;top:275px;width:1px;height:212px;background:#a8a8a8"></div>
<div style="left:31px;top:291px;width:1284px;height:1px;background:#a8a8a8"></div>
<div style="left:31px;top:308px;width:41px;height:1px;background:#a8a8a8"></div>
<div style="left:31px;top:325px;width:41px;height:1px;background:#a8a8a8"></div>
<div style="left:31px;top:342px;width:41px;height:1px;background:#a8a8a8"></div>
<div style="left:31px;top:359px;width:41px;height:1px;background:#a8a8a8"></div>
<div style="left:31px;top:376px;width:41px;height:1px;background:#a8a8a8"></div>
<div style="left:31px;top:393px;width:41px;height:1px;background:#a8a8a8"></div>
<div style="left:31px;top:410px;width:41px;height:1px;background:#a8a8a8"></div>
<div style="left:31px;top:427px;width:41px;height:1px;background:#a8a8a8"></div>
<div style="left:31px;top:460px;width:41px;height:1px;background:#a8a8a8"></div>
<div style="left:31px;top:477px;width:41px;height:1px;background:#a8a8a8"></div>
<div style="left:203px;top:275px;width:1px;height:16px;background:#a8a8a8"></div>
<div style="left:387px;top:275px;width:1px;height:16px;background:#a8a8a8"></div>
<div style="left:571px;top:275px;width:1px;height:16px;background:#a8a8a8"></div>
<div style="left:702px;top:275px;width:1px;height:16px;background:#a8a8a8"></div>
<div style="left:833px;top:275px;width:1px;height:16px;background:#a8a8a8"></div>
<div style="left:965px;top:275px;width:1px;height:16px;background:#a8a8a8"></div>
<div style="left:1096px;top:275px;width:1px;height:16px;background:#a8a8a8"></div>
<div style="left:1227px;top:275px;width:1px;height:16px;background:#a8a8a8"></div>
<div style="left:73px;top:325px;width:1242px;height:1px;background:#9a9a9a"></div>
<div style="left:571px;top:292px;width:1px;height:195px;background:#9a9a9a"></div>
<div style="left:203px;top:292px;width:1px;height:168px;background:#333333"></div>
<div style="left:387px;top:292px;width:1px;height:168px;background:#333333"></div>
<div style="left:702px;top:292px;width:1px;height:168px;background:#333333"></div>
<div style="left:833px;top:292px;width:1px;height:168px;background:#333333"></div>
<div style="left:965px;top:292px;width:1px;height:168px;background:#333333"></div>
<div style="left:1096px;top:292px;width:1px;height:168px;background:#333333"></div>
<div style="left:1227px;top:292px;width:1px;height:168px;background:#333333"></div>
<div style="left:388px;top:342px;width:927px;height:1px;background:#333333"></div>
<div style="left:572px;top:342px;width:0px;height:0px;"></div>
<div style="left:388px;top:359px;width:927px;height:1px;background:#333333"></div>
<div style="left:572px;top:359px;width:0px;height:0px;"></div>
<div style="left:388px;top:376px;width:927px;height:1px;background:#333333"></div>
<div style="left:572px;top:376px;width:0px;height:0px;"></div>
<div style="left:388px;top:393px;width:927px;height:1px;background:#333333"></div>
<div style="left:572px;top:393px;width:0px;height:0px;"></div>
<div style="left:388px;top:410px;width:927px;height:1px;background:#333333"></div>
<div style="left:572px;top:410px;width:0px;height:0px;"></div>
<div style="left:73px;top:427px;width:1242px;height:1px;background:#333333"></div>
<div style="left:73px;top:460px;width:1242px;height:1px;background:repeating-linear-gradient(90deg,#333333 0 5px,transparent 5px 8px)"></div>
<div style="left:73px;top:477px;width:1242px;height:1px;background:#dcdcdc"></div>
<div style="left:203px;top:461px;width:1px;height:26px;background:#dcdcdc"></div>
<div style="left:387px;top:461px;width:1px;height:26px;background:#dcdcdc"></div>
<div style="left:702px;top:461px;width:1px;height:26px;background:#dcdcdc"></div>
<div style="left:833px;top:461px;width:1px;height:26px;background:#dcdcdc"></div>
<div style="left:965px;top:461px;width:1px;height:26px;background:#dcdcdc"></div>
<div style="left:1096px;top:461px;width:1px;height:26px;background:#dcdcdc"></div>
<div style="left:1227px;top:461px;width:1px;height:26px;background:#dcdcdc"></div>
<div style="left:571px;top:461px;width:1px;height:26px;background:#8a8a8a"></div>
<div class="t" style="left:76px;top:302.0px;font-size:13px;line-height:13px;height:13px;color:#252525;font-weight:bold;text-align:left;">Кодификатор</div>
<div class="t" style="left:207px;top:302.0px;font-size:13px;line-height:13px;height:13px;color:#252525;font-weight:bold;text-align:left;">Статья оборотов</div>
<div class="t" style="left:391px;top:302.0px;font-size:13px;line-height:13px;height:13px;color:#252525;font-weight:bold;text-align:left;">Номенклатурная группа</div>
<div style="left:572px;top:292px;width:130px;height:33px;overflow:hidden"><div class="t" style="left:0;top:10px;width:130px;text-align:center;font-size:13px;line-height:13px;height:13px;color:#1a1a1a;font-weight:bold">Январь 2019</div></div>
<div style="left:703px;top:292px;width:130px;height:33px;overflow:hidden"><div class="t" style="left:0;top:10px;width:130px;text-align:center;font-size:13px;line-height:13px;height:13px;color:#1a1a1a;font-weight:bold">Февраль 2019</div></div>
<div style="left:834px;top:292px;width:131px;height:33px;overflow:hidden"><div class="t" style="left:0;top:10px;width:131px;text-align:center;font-size:13px;line-height:13px;height:13px;color:#1a1a1a;font-weight:bold">Март 2019</div></div>
<div style="left:966px;top:292px;width:130px;height:33px;overflow:hidden"><div class="t" style="left:0;top:10px;width:130px;text-align:center;font-size:13px;line-height:13px;height:13px;color:#1a1a1a;font-weight:bold">1 кв 2019</div></div>
<div style="left:1097px;top:292px;width:130px;height:33px;overflow:hidden"><div class="t" style="left:0;top:10px;width:130px;text-align:center;font-size:13px;line-height:13px;height:13px;color:#1a1a1a;font-weight:bold">Апрель 2019</div></div>
<div style="left:1228px;top:292px;width:87px;height:33px;overflow:hidden"><div class="t" style="left:0;top:10px;width:130px;text-align:center;font-size:13px;line-height:13px;height:13px;color:#1a1a1a;font-weight:bold">Май 2019</div></div>
<div class="t" style="left:391px;top:327.15px;font-size:14px;line-height:14px;height:14px;color:#252525;font-weight:normal;text-align:left;transform:scaleX(0.91);transform-origin:0 0;">Бытовая техника</div>
<div class="t" style="left:299px;width:400px;text-align:right;top:327.15px;font-size:14px;line-height:14px;height:14px;color:#252525;font-weight:normal;transform:scaleX(0.91);transform-origin:100% 0;">80 000,00</div>
<div class="t" style="left:430px;width:400px;text-align:right;top:327.15px;font-size:14px;line-height:14px;height:14px;color:#252525;font-weight:normal;transform:scaleX(0.91);transform-origin:100% 0;">80 000,00</div>
<div class="t" style="left:562px;width:400px;text-align:right;top:327.15px;font-size:14px;line-height:14px;height:14px;color:#252525;font-weight:normal;transform:scaleX(0.91);transform-origin:100% 0;">80 000,00</div>
<div class="t" style="left:693px;width:400px;text-align:right;top:327.15px;font-size:14px;line-height:14px;height:14px;color:#252525;font-weight:normal;transform:scaleX(0.91);transform-origin:100% 0;">240 000,00</div>
<div class="t" style="left:391px;top:344.15px;font-size:14px;line-height:14px;height:14px;color:#252525;font-weight:normal;text-align:left;transform:scaleX(0.91);transform-origin:0 0;">Вентиляторы</div>
<div class="t" style="left:299px;width:400px;text-align:right;top:344.15px;font-size:14px;line-height:14px;height:14px;color:#252525;font-weight:normal;transform:scaleX(0.91);transform-origin:100% 0;">90 000,00</div>
<div class="t" style="left:430px;width:400px;text-align:right;top:344.15px;font-size:14px;line-height:14px;height:14px;color:#252525;font-weight:normal;transform:scaleX(0.91);transform-origin:100% 0;">90 000,00</div>
<div class="t" style="left:562px;width:400px;text-align:right;top:344.15px;font-size:14px;line-height:14px;height:14px;color:#252525;font-weight:normal;transform:scaleX(0.91);transform-origin:100% 0;">90 000,00</div>
<div class="t" style="left:693px;width:400px;text-align:right;top:344.15px;font-size:14px;line-height:14px;height:14px;color:#252525;font-weight:normal;transform:scaleX(0.91);transform-origin:100% 0;">270 000,00</div>
<div class="t" style="left:391px;top:361.15px;font-size:14px;line-height:14px;height:14px;color:#252525;font-weight:normal;text-align:left;transform:scaleX(0.91);transform-origin:0 0;">Компьютеры</div>
<div class="t" style="left:299px;width:400px;text-align:right;top:361.15px;font-size:14px;line-height:14px;height:14px;color:#252525;font-weight:normal;transform:scaleX(0.91);transform-origin:100% 0;">70 000,00</div>
<div class="t" style="left:430px;width:400px;text-align:right;top:361.15px;font-size:14px;line-height:14px;height:14px;color:#252525;font-weight:normal;transform:scaleX(0.91);transform-origin:100% 0;">70 000,00</div>
<div class="t" style="left:562px;width:400px;text-align:right;top:361.15px;font-size:14px;line-height:14px;height:14px;color:#252525;font-weight:normal;transform:scaleX(0.91);transform-origin:100% 0;">70 000,00</div>
<div class="t" style="left:693px;width:400px;text-align:right;top:361.15px;font-size:14px;line-height:14px;height:14px;color:#252525;font-weight:normal;transform:scaleX(0.91);transform-origin:100% 0;">210 000,00</div>
<div class="t" style="left:391px;top:378.15px;font-size:14px;line-height:14px;height:14px;color:#252525;font-weight:normal;text-align:left;transform:scaleX(0.91);transform-origin:0 0;">Кофеварки</div>
<div class="t" style="left:299px;width:400px;text-align:right;top:378.15px;font-size:14px;line-height:14px;height:14px;color:#252525;font-weight:normal;transform:scaleX(0.91);transform-origin:100% 0;">60 000,00</div>
<div class="t" style="left:430px;width:400px;text-align:right;top:378.15px;font-size:14px;line-height:14px;height:14px;color:#252525;font-weight:normal;transform:scaleX(0.91);transform-origin:100% 0;">60 000,00</div>
<div class="t" style="left:562px;width:400px;text-align:right;top:378.15px;font-size:14px;line-height:14px;height:14px;color:#252525;font-weight:normal;transform:scaleX(0.91);transform-origin:100% 0;">60 000,00</div>
<div class="t" style="left:693px;width:400px;text-align:right;top:378.15px;font-size:14px;line-height:14px;height:14px;color:#252525;font-weight:normal;transform:scaleX(0.91);transform-origin:100% 0;">180 000,00</div>
<div class="t" style="left:391px;top:395.15px;font-size:14px;line-height:14px;height:14px;color:#252525;font-weight:normal;text-align:left;transform:scaleX(0.91);transform-origin:0 0;">Миксеры</div>
<div class="t" style="left:299px;width:400px;text-align:right;top:395.15px;font-size:14px;line-height:14px;height:14px;color:#252525;font-weight:normal;transform:scaleX(0.91);transform-origin:100% 0;">80 000,00</div>
<div class="t" style="left:430px;width:400px;text-align:right;top:395.15px;font-size:14px;line-height:14px;height:14px;color:#252525;font-weight:normal;transform:scaleX(0.91);transform-origin:100% 0;">80 000,00</div>
<div class="t" style="left:562px;width:400px;text-align:right;top:395.15px;font-size:14px;line-height:14px;height:14px;color:#252525;font-weight:normal;transform:scaleX(0.91);transform-origin:100% 0;">80 000,00</div>
<div class="t" style="left:693px;width:400px;text-align:right;top:395.15px;font-size:14px;line-height:14px;height:14px;color:#252525;font-weight:normal;transform:scaleX(0.91);transform-origin:100% 0;">240 000,00</div>
<div class="t" style="left:391px;top:412.15px;font-size:14px;line-height:14px;height:14px;color:#252525;font-weight:normal;text-align:left;transform:scaleX(0.91);transform-origin:0 0;">Пылесосы</div>
<div class="t" style="left:299px;width:400px;text-align:right;top:412.15px;font-size:14px;line-height:14px;height:14px;color:#252525;font-weight:normal;transform:scaleX(0.91);transform-origin:100% 0;">75 000,00</div>
<div class="t" style="left:430px;width:400px;text-align:right;top:412.15px;font-size:14px;line-height:14px;height:14px;color:#252525;font-weight:normal;transform:scaleX(0.91);transform-origin:100% 0;">75 000,00</div>
<div class="t" style="left:562px;width:400px;text-align:right;top:412.15px;font-size:14px;line-height:14px;height:14px;color:#252525;font-weight:normal;transform:scaleX(0.91);transform-origin:100% 0;">75 000,00</div>
<div class="t" style="left:693px;width:400px;text-align:right;top:412.15px;font-size:14px;line-height:14px;height:14px;color:#252525;font-weight:normal;transform:scaleX(0.91);transform-origin:100% 0;">225 000,00</div>
<div class="t" style="left:76px;top:369.15px;font-size:14px;line-height:14px;height:14px;color:#252525;font-weight:normal;text-align:left;transform:scaleX(0.91);transform-origin:0 0;">1.1</div>
<div class="t" style="left:207px;top:362.15px;font-size:14px;line-height:14px;height:14px;color:#252525;font-weight:normal;text-align:left;transform:scaleX(0.91);transform-origin:0 0;">Доходы от основной</div>
<div class="t" style="left:207px;top:377.15px;font-size:14px;line-height:14px;height:14px;color:#252525;font-weight:normal;text-align:left;transform:scaleX(0.91);transform-origin:0 0;">деятельности</div>
<div class="t" style="left:76px;top:437.15px;font-size:14px;line-height:14px;height:14px;color:#252525;font-weight:normal;text-align:left;transform:scaleX(0.91);transform-origin:0 0;">1.2</div>
<div class="t" style="left:207px;top:429.15px;font-size:14px;line-height:14px;height:14px;color:#252525;font-weight:normal;text-align:left;transform:scaleX(0.91);transform-origin:0 0;">Доходы от прочей</div>
<div class="t" style="left:207px;top:445.15px;font-size:14px;line-height:14px;height:14px;color:#252525;font-weight:normal;text-align:left;transform:scaleX(0.91);transform-origin:0 0;">деятельности</div>
<div class="t" style="left:391px;top:437.15px;font-size:14px;line-height:14px;height:14px;color:#252525;font-weight:normal;text-align:left;transform:scaleX(0.91);transform-origin:0 0;">Услуги</div>
<div class="t" style="left:299px;width:400px;text-align:right;top:437.15px;font-size:14px;line-height:14px;height:14px;color:#252525;font-weight:normal;transform:scaleX(0.91);transform-origin:100% 0;">120 000,00</div>
<div class="t" style="left:430px;width:400px;text-align:right;top:437.15px;font-size:14px;line-height:14px;height:14px;color:#252525;font-weight:normal;transform:scaleX(0.91);transform-origin:100% 0;">120 000,00</div>
<div class="t" style="left:562px;width:400px;text-align:right;top:437.15px;font-size:14px;line-height:14px;height:14px;color:#252525;font-weight:normal;transform:scaleX(0.91);transform-origin:100% 0;">120 000,00</div>
<div class="t" style="left:693px;width:400px;text-align:right;top:437.15px;font-size:14px;line-height:14px;height:14px;color:#252525;font-weight:normal;transform:scaleX(0.91);transform-origin:100% 0;">360 000,00</div>
<div style="left:572px;top:343px;width:130px;height:16px;background:#9fe29f"></div>
<div class="t" style="left:299px;width:400px;text-align:right;top:344.15px;font-size:14px;line-height:14px;height:14px;color:#252525;font-weight:normal;transform:scaleX(0.91);transform-origin:100% 0;">90 000,00</div>
<div style="left:568px;top:339px;width:138px;height:24px;border:3px solid #fcbd00;border-top-width:2px"></div>
<div style="left:572px;top:342px;width:130px;height:3px;background:#fcbd00"></div>
<div style="left:572px;top:342px;width:2px;height:17px;background:#fcbd00"></div>
<div style="left:571px;top:341px;width:1px;height:19px;background:#9a9a9a"></div>
<div style="left:572px;top:359px;width:130px;height:1px;background:#111"></div>
<div style="left:31px;top:487px;width:1298px;height:14px;background:#fff"></div>
<svg style="position:absolute;left:38px;top:490px;" width="6" height="8" viewBox="0 0 6 8"><path d="M5.5 0.5 V7.5 L0.5 4 Z" fill="#c4c4c4"/></svg>
<div style="left:53px;top:490px;width:1239px;height:8px;background:#d6d6d6;border-radius:4px"></div>
<div style="left:53px;top:490px;width:412px;height:8px;background:#9c9c9c;border-radius:4px"></div>
<svg style="position:absolute;left:1301px;top:490px;" width="6" height="8" viewBox="0 0 6 8"><path d="M0.5 0.5 V7.5 L5.5 4 Z" fill="#555"/></svg>
<div style="left:1315px;top:275px;width:14px;height:212px;background:#fff"></div>
<svg style="position:absolute;left:1318px;top:281px;" width="8" height="6" viewBox="0 0 8 6"><path d="M0.5 5.5 H7.5 L4 0.5 Z" fill="#c4c4c4"/></svg>
<div style="left:1318px;top:296px;width:8px;height:168px;background:#9c9c9c;border-radius:4px"></div>
<svg style="position:absolute;left:1318px;top:474px;" width="8" height="6" viewBox="0 0 8 6"><path d="M0.5 0.5 H7.5 L4 5.5 Z" fill="#555"/></svg>
<div style="left:30px;top:506px;width:1298px;height:1px;background:repeating-linear-gradient(90deg,#c8c8c8 0 3px,transparent 3px 6px)"></div>
<div class="t" style="left:29px;top:512.46px;font-size:16px;line-height:16px;height:16px;color:#13994a;font-weight:normal;text-align:left;">Данные</div>
<div class="btnd" style="left:29px;top:533px;width:84px;height:27px;"></div>
<div class="t" style="left:43px;top:539.15px;font-size:14px;line-height:14px;height:14px;color:#999;font-weight:normal;text-align:left;transform:scaleX(0.91);transform-origin:0 0;">Добавить</div>
<div class="btnd" style="left:133px;top:533px;width:60px;height:27px;"></div>
<div style="left:162px;top:534px;width:1px;height:25px;background:#dadada"></div>
<svg style="position:absolute;left:141px;top:539px;" width="13" height="13" viewBox="0 0 13 13"><path d="M6.5 0.5 L12.5 6.5 H9 V12.5 H4 V6.5 H0.5 Z" fill="#a9b3bb"/></svg>
<svg style="position:absolute;left:170px;top:539px;" width="13" height="13" viewBox="0 0 13 13"><path d="M6.5 12.5 L12.5 6.5 H9 V0.5 H4 V6.5 H0.5 Z" fill="#a9b3bb"/></svg>
<div class="btnd" style="left:213px;top:533px;width:201px;height:27px;"></div>
<svg style="position:absolute;left:225px;top:540px;" width="9" height="13" viewBox="0 0 9 13"><path d="M1.5 1.5 L6.5 6.5 L1.5 11.5" fill="none" stroke="#9aa2aa" stroke-width="2.4"/></svg>
<div class="t" style="left:243px;top:539.15px;font-size:14px;line-height:14px;height:14px;color:#999;font-weight:normal;text-align:left;transform:scaleX(0.91);transform-origin:0 0;">Скопировать в зависимые</div>
<div class="btnd" style="left:423px;top:533px;width:30px;height:27px;"></div>
<svg style="position:absolute;left:423px;top:533px;" width="30" height="27" viewBox="0 0 30 27"><g fill="none" stroke="#9aa8b4" stroke-width="1.4"><path d="M10.5 19 V8.5 H20"/></g><path d="M10.7 9 L18 16.3" stroke="#9aa8b4" stroke-width="1" stroke-dasharray="1.2 0.8"/><path d="M19.5 5 L23.2 8.5 L19.5 12 Z M7 17 L10.5 20.8 L14 17 Z M16 18.8 L21 13.8 V18.8 Z" fill="#9aa8b4"/></svg>
<div class="btnd" style="left:485px;top:533px;width:61px;height:27px;"></div>
<div class="t" style="left:499px;top:539.15px;font-size:14px;line-height:14px;height:14px;color:#999;font-weight:normal;text-align:left;transform:scaleX(0.91);transform-origin:0 0;">Еще</div>
<svg style="position:absolute;left:534px;top:546px;" width="6" height="3" viewBox="0 0 6 3"><path d="M0 0 H6 L3 3 Z" fill="#999"/></svg>
<div style="left:29px;top:563px;width:517px;height:138px;border:1px solid #9c9c9c;border-top:2px solid #9c9c9c;background:#fff"></div>
<div style="left:30px;top:565px;width:515px;height:29px;background:#f2f2f2"></div>
<div style="left:30px;top:594px;width:515px;height:1px;background:#dcdcdc"></div>
<div style="left:132px;top:565px;width:1px;height:29px;background:#d6d6d6"></div>
<div style="left:286px;top:565px;width:1px;height:29px;background:#d6d6d6"></div>
<div style="left:440px;top:565px;width:1px;height:29px;background:#d6d6d6"></div>
<div class="t" style="left:46px;top:571.15px;font-size:14px;line-height:14px;height:14px;color:#404040;font-weight:normal;text-align:left;transform:scaleX(0.91);transform-origin:0 0;">N</div>
<div class="t" style="left:149px;top:571.15px;font-size:14px;line-height:14px;height:14px;color:#404040;font-weight:normal;text-align:left;transform:scaleX(0.91);transform-origin:0 0;">Контрагент</div>
<div class="t" style="left:303px;top:571.15px;font-size:14px;line-height:14px;height:14px;color:#404040;font-weight:normal;text-align:left;transform:scaleX(0.91);transform-origin:0 0;">Договор контраге...</div>
<div class="t" style="left:457px;top:571.15px;font-size:14px;line-height:14px;height:14px;color:#404040;font-weight:normal;text-align:left;transform:scaleX(0.91);transform-origin:0 0;">Проект</div>
<div style="left:30px;top:595px;width:102px;height:27px;background:#fcefa8"></div>
<div style="left:133px;top:595px;width:412px;height:27px;background:#fdf7d0"></div>
<div style="left:132px;top:595px;width:1px;height:27px;background:#fffbe8"></div>
<div style="left:286px;top:595px;width:1px;height:27px;background:#fffbe8"></div>
<div style="left:440px;top:595px;width:1px;height:27px;background:#fffbe8"></div>
<div style="left:30px;top:622px;width:515px;height:1px;background:#e6e6e6"></div>
<div class="t" style="left:-284px;width:400px;text-align:right;top:602.15px;font-size:14px;line-height:14px;height:14px;color:#252525;font-weight:normal;transform:scaleX(0.91);transform-origin:100% 0;">2</div>
<div style="left:440px;top:595px;width:105px;height:27px;overflow:hidden"><div class="t" style="left:17px;top:8px;font-size:13px;line-height:13px;height:13px;color:#404040">Инвест проект</div></div>
<svg style="position:absolute;left:38px;top:689px;" width="6" height="8" viewBox="0 0 6 8"><path d="M5.5 0.5 V7.5 L0.5 4 Z" fill="#c4c4c4"/></svg>
<div style="left:53px;top:689px;width:469px;height:8px;background:#d6d6d6;border-radius:4px"></div>
<div style="left:53px;top:689px;width:198px;height:8px;background:#9c9c9c;border-radius:4px"></div>
<svg style="position:absolute;left:531px;top:689px;" width="6" height="8" viewBox="0 0 6 8"><path d="M0.5 0.5 V7.5 L5.5 4 Z" fill="#555"/></svg>
<div style="left:550px;top:511px;width:1px;height:196px;background:repeating-linear-gradient(180deg,#c8c8c8 0 3px,transparent 3px 6px)"></div>
<div class="t" style="left:556px;top:512.46px;font-size:16px;line-height:16px;height:16px;color:#13994a;font-weight:normal;text-align:left;">Зависимые обороты</div>
<div class="t" style="left:556px;top:539.25px;font-size:12.7px;line-height:12.7px;height:12.7px;color:#404040;font-weight:normal;text-align:left;">Профиль распределения:</div>
<div style="left:714px;top:533px;width:410px;height:25px;border:1px solid #cfcfcf;border-radius:3px;background:#fff"></div>
<div style="left:1102px;top:534px;width:1px;height:23px;background:#cfcfcf"></div>
<svg style="position:absolute;left:1108px;top:540px;" width="11" height="11" viewBox="0 0 11 11"><rect x="3.5" y="0.5" width="6" height="6" fill="none" stroke="#333"/><path d="M3.5 3.5 H0.5 V9.5 H6.5 V6.5" fill="none" stroke="#333"/></svg>
<div class="btnd" style="left:556px;top:567px;width:30px;height:27px;"></div>
<svg style="position:absolute;left:564px;top:573px;" width="13" height="13" viewBox="0 0 13 13"><path d="M6.5 0.5 L12.5 6.5 H9 V12.5 H4 V6.5 H0.5 Z" fill="#a9b3bb"/></svg>
<div class="btnd" style="left:595px;top:567px;width:30px;height:27px;"></div>
<svg style="position:absolute;left:603px;top:573px;" width="13" height="13" viewBox="0 0 13 13"><path d="M6.5 12.5 L12.5 6.5 H9 V0.5 H4 V6.5 H0.5 Z" fill="#a9b3bb"/></svg>
<div class="btnd" style="left:634px;top:567px;width:89px;height:27px;"></div>
<div class="t" style="left:647px;top:573.15px;font-size:14px;line-height:14px;height:14px;color:#999;font-weight:normal;text-align:left;transform:scaleX(0.91);transform-origin:0 0;">Действия</div>
<svg style="position:absolute;left:710px;top:579px;" width="6" height="3" viewBox="0 0 6 3"><path d="M0 0 H6 L3 3 Z" fill="#999"/></svg>
<div class="btnd" style="left:1269px;top:567px;width:61px;height:27px;"></div>
<div class="t" style="left:1283px;top:573.15px;font-size:14px;line-height:14px;height:14px;color:#999;font-weight:normal;text-align:left;transform:scaleX(0.91);transform-origin:0 0;">Еще</div>
<svg style="position:absolute;left:1318px;top:579px;" width="6" height="3" viewBox="0 0 6 3"><path d="M0 0 H6 L3 3 Z" fill="#999"/></svg>
<div style="left:556px;top:597px;width:774px;height:104px;border:1px solid #9c9c9c;border-top:2px solid #9c9c9c;background:#fff"></div>
<div style="left:557px;top:599px;width:758px;height:29px;background:#f2f2f2"></div>
<div style="left:557px;top:628px;width:758px;height:1px;background:#dcdcdc"></div>
<div style="left:659px;top:599px;width:1px;height:29px;background:#d6d6d6"></div>
<div style="left:775px;top:599px;width:1px;height:29px;background:#d6d6d6"></div>
<div style="left:797px;top:599px;width:1px;height:29px;background:#d6d6d6"></div>
<div style="left:1138px;top:599px;width:1px;height:29px;background:#d6d6d6"></div>
<div style="left:1164px;top:599px;width:1px;height:29px;background:#d6d6d6"></div>
<div style="left:1190px;top:599px;width:1px;height:29px;background:#d6d6d6"></div>
<div style="left:1297px;top:599px;width:1px;height:29px;background:#d6d6d6"></div>
<div class="t" style="left:573px;top:605.15px;font-size:14px;line-height:14px;height:14px;color:#404040;font-weight:normal;text-align:left;transform:scaleX(0.91);transform-origin:0 0;">N</div>
<div class="t" style="left:676px;top:605.15px;font-size:14px;line-height:14px;height:14px;color:#404040;font-weight:normal;text-align:left;transform:scaleX(0.91);transform-origin:0 0;">Период</div>
<div class="t" style="left:814px;top:605.15px;font-size:14px;line-height:14px;height:14px;color:#404040;font-weight:normal;text-align:left;transform:scaleX(0.91);transform-origin:0 0;">Статья оборотов</div>
<div class="t" style="left:1207px;top:605.15px;font-size:14px;line-height:14px;height:14px;color:#404040;font-weight:normal;text-align:left;transform:scaleX(0.91);transform-origin:0 0;">Сумма</div>
<div style="left:1314px;top:600px;width:1px;height:14px;background:#f5c070"></div>
<div style="left:557px;top:629px;width:102px;height:27px;background:#fcefa8"></div>
<div style="left:660px;top:629px;width:655px;height:27px;background:#fdf7d0"></div>
<div style="left:659px;top:629px;width:1px;height:27px;background:#fffbe8"></div>
<div style="left:775px;top:629px;width:1px;height:27px;background:#fffbe8"></div>
<div style="left:797px;top:629px;width:1px;height:27px;background:#fffbe8"></div>
<div style="left:1138px;top:629px;width:1px;height:27px;background:#fffbe8"></div>
<div style="left:1164px;top:629px;width:1px;height:27px;background:#fffbe8"></div>
<div style="left:1190px;top:629px;width:1px;height:27px;background:#fffbe8"></div>
<div style="left:1297px;top:629px;width:1px;height:27px;background:#fffbe8"></div>
<div style="left:557px;top:656px;width:758px;height:1px;background:#e6e6e6"></div>
<div class="t" style="left:243px;width:400px;text-align:right;top:636.15px;font-size:14px;line-height:14px;height:14px;color:#252525;font-weight:normal;transform:scaleX(0.91);transform-origin:100% 0;">8</div>
<div class="t" style="left:676px;top:636.15px;font-size:14px;line-height:14px;height:14px;color:#252525;font-weight:normal;text-align:left;transform:scaleX(0.91);transform-origin:0 0;">01.01.2019</div>
<div class="t" style="left:814px;top:636.15px;font-size:14px;line-height:14px;height:14px;color:#252525;font-weight:normal;text-align:left;transform:scaleX(0.91);transform-origin:0 0;">Поступления от реализации товаров, работ, услуг</div>
<div class="t" style="left:881px;width:400px;text-align:right;top:636.15px;font-size:14px;line-height:14px;height:14px;color:#252525;font-weight:normal;transform:scaleX(0.91);transform-origin:100% 0;">106 200,00</div>
<div class="t" style="left:243px;width:400px;text-align:right;top:665.15px;font-size:14px;line-height:14px;height:14px;color:#252525;font-weight:normal;transform:scaleX(0.91);transform-origin:100% 0;">9</div>
<div class="t" style="left:676px;top:665.15px;font-size:14px;line-height:14px;height:14px;color:#252525;font-weight:normal;text-align:left;transform:scaleX(0.91);transform-origin:0 0;">01.01.2019</div>
<div class="t" style="left:814px;top:665.15px;font-size:14px;line-height:14px;height:14px;color:#252525;font-weight:normal;text-align:left;transform:scaleX(0.91);transform-origin:0 0;">Заработная плата</div>
<div class="t" style="left:881px;width:400px;text-align:right;top:665.15px;font-size:14px;line-height:14px;height:14px;color:#252525;font-weight:normal;transform:scaleX(0.91);transform-origin:100% 0;">54 000,00</div>
<svg style="position:absolute;left:565px;top:689px;" width="6" height="8" viewBox="0 0 6 8"><path d="M5.5 0.5 V7.5 L0.5 4 Z" fill="#c4c4c4"/></svg>
<div style="left:580px;top:689px;width:712px;height:8px;background:#d6d6d6;border-radius:4px"></div>
<div style="left:580px;top:689px;width:414px;height:8px;background:#787878;border-radius:4px"></div>
<svg style="position:absolute;left:1302px;top:689px;" width="6" height="8" viewBox="0 0 6 8"><path d="M0.5 0.5 V7.5 L5.5 4 Z" fill="#555"/></svg>
<svg style="position:absolute;left:1318px;top:606px;" width="8" height="6" viewBox="0 0 8 6"><path d="M0.5 5.5 H7.5 L4 0.5 Z" fill="#c4c4c4"/></svg>
<div style="left:1318px;top:621px;width:8px;height:42px;background:#d6d6d6;border-radius:4px"></div>
<div style="left:1318px;top:621px;width:8px;height:8px;background:#8a8a8a;border-radius:4px"></div>
<svg style="position:absolute;left:1318px;top:673px;" width="8" height="6" viewBox="0 0 8 6"><path d="M0.5 0.5 H7.5 L4 5.5 Z" fill="#555"/></svg>
</body></html>
